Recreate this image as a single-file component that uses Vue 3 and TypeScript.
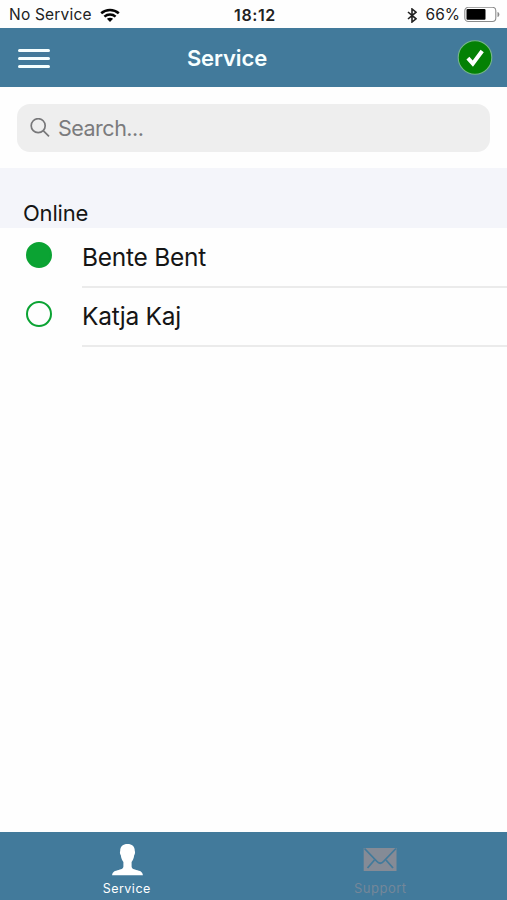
<script setup lang="ts">
import { ref, computed } from 'vue'

interface Contact {
  name: string
  available: boolean
}

type Tab = 'Service' | 'Support'

const contacts: Contact[] = [
  { name: 'Bente Bent', available: true },
  { name: 'Katja Kaj', available: false },
]

const query = ref('')
const activeTab = ref<Tab>('Service')

const visibleContacts = computed(() =>
  contacts.filter((c) => c.name.toLowerCase().includes(query.value.toLowerCase())),
)
</script>

<template>
  <div class="screen">
    <div class="status">
      <div class="status-side">
        <span class="carrier">No Service</span>
        <svg class="wifi" viewBox="0 0 20 14" width="20" height="14">
          <g fill="none" stroke="#050505" stroke-width="2.5">
            <path d="M1.2 5.2C6.2 .8 13.8 .8 18.8 5.2" />
            <path d="M4.4 8.6C7.6 5.8 12.4 5.8 15.6 8.6" />
          </g>
          <path d="M6.9 10.8C8.7 9.3 11.3 9.3 13.1 10.8L10 13.9Z" fill="#050505" />
        </svg>
      </div>
      <span class="clock">18:12</span>
      <div class="status-side right">
        <svg class="bluetooth" viewBox="0 0 10 15" width="10" height="15">
          <path d="M1 4L9 10.8L5 14V1L9 4.2L1 11" fill="none" stroke="#222" stroke-width="1.6" />
        </svg>
        <span class="percent">66%</span>
        <svg class="battery" viewBox="0 0 36 16" width="36" height="16">
          <rect x=".8" y=".3" width="31" height="14.2" rx="3.5" fill="#fff" stroke="#8b8b8b" stroke-width="1.1" />
          <rect x="2.5" y="2.1" width="19" height="10.6" rx="1" fill="#000" />
          <path d="M33.5 4.9C36 5.5 36 9.3 33.5 9.9Z" fill="#8b8b8b" />
        </svg>
      </div>
    </div>

    <header class="bar">
      <button class="menu" aria-label="Menu"><i></i><i></i><i></i></button>
      <h1>Service</h1>
      <svg class="check" viewBox="0 0 36 36" width="36" height="36">
        <circle cx="18" cy="17.5" r="16.8" fill="#048104" stroke="#75b58a" stroke-width="1.1" />
        <path d="M10.9 18.2L15.8 23.6L25.2 11" fill="none" stroke="#fff" stroke-width="4" />
      </svg>
    </header>

    <div class="search-area">
      <label class="search">
        <svg viewBox="0 0 20 20" width="20" height="20">
          <g fill="none" stroke="#777779" stroke-width="1.7">
            <circle cx="8.2" cy="7.7" r="7" />
            <path d="M13.2 12.7L19 18.3" />
          </g>
        </svg>
        <input v-model="query" type="text" placeholder="Search..." />
      </label>
    </div>

    <h2>Online</h2>
    <ul>
      <li v-for="contact in visibleContacts" :key="contact.name">
        <span class="dot" :class="{ filled: contact.available }"></span>
        <span class="name">{{ contact.name }}</span>
      </li>
    </ul>

    <nav>
      <button :class="{ active: activeTab === 'Service' }" @click="activeTab = 'Service'">
        <svg viewBox="0 0 32 32" width="32" height="32">
          <path
            fill="currentColor"
            d="M16.5 0C21 0 23.9 2.6 23.8 7C24.3 8 24.1 10.2 23.2 11.2C22.8 14.5 21.8 16.5 20.6 18V22.5C20.8 25 22.8 25.2 26.5 26.3C30.5 27.4 31.5 28.6 31.9 31.3H1.1C1.5 28.6 2.5 27.4 6.5 26.3C10.2 25.2 12.2 25 12.4 22.5V18C11.2 16.5 10.2 14.5 9.8 11.2C8.9 10.2 8.7 8 9.2 7C9.1 2.6 12 0 16.5 0Z"
          />
        </svg>
        <span>Service</span>
      </button>
      <button :class="{ active: activeTab === 'Support' }" @click="activeTab = 'Support'">
        <svg viewBox="0 0 34 32" width="34" height="32">
          <rect x=".7" y="4" width="32.8" height="23" fill="currentColor" />
          <g fill="none" stroke="#427a9b" stroke-width="1.8">
            <path d="M1.5 4.5L14 17.5C16 19.8 18.5 19.8 20.5 17.5L33 4.5" />
            <path d="M4.5 24L11.5 16M30 24L23 16" />
          </g>
        </svg>
        <span>Support</span>
      </button>
    </nav>
  </div>
</template>

<style>
body {
  margin: 0;
  background: #fff;
}
</style>

<style scoped>
.screen {
  display: flex;
  flex-direction: column;
  height: 900px;
  background: #fefefe;
  color: #151515;
  font-family: Inter, 'Liberation Sans', sans-serif;
}
button {
  padding: 0;
  border: 0;
  background: none;
  font: inherit;
}
svg {
  display: block;
  flex: none;
}
.status {
  display: grid;
  grid-template-columns: 1fr auto 1fr;
  align-items: center;
  box-sizing: border-box;
  height: 28px;
  padding: 1px 7px 0 9px;
  color: #222;
  font-size: 15.5px;
  line-height: 28px;
}
.status-side {
  display: flex;
  align-items: center;
}
.right {
  justify-content: flex-end;
}
.carrier {
  letter-spacing: 0.2px;
}
.wifi {
  margin-left: 8px;
}
.clock {
  padding-left: 1px;
  font-size: 16px;
  font-weight: 600;
  letter-spacing: 0.6px;
}
.percent {
  margin: 0 4px 0 9px;
}
.bar {
  display: grid;
  grid-template-columns: 36px 1fr 36px;
  align-items: center;
  box-sizing: border-box;
  height: 59px;
  padding: 0 14px 0 18px;
  background: #427a9b;
}
.menu {
  display: flex;
  flex-direction: column;
  gap: 5px;
  width: 32px;
  padding-top: 1px;
}
.menu i {
  height: 3px;
  border-radius: 1.5px;
  background: #f5ffff;
}
h1 {
  margin: 0;
  padding-right: 57px;
  color: #f7ffff;
  font-size: 22px;
  font-weight: 600;
  letter-spacing: -0.1px;
  text-align: center;
}
.search-area {
  height: 48px;
  padding: 17px 17px 16px;
}
.search {
  display: flex;
  align-items: center;
  gap: 8px;
  height: 48px;
  padding-left: 13px;
  border-radius: 13px;
  background: #eee;
}
input {
  flex: 1;
  min-width: 0;
  padding: 0;
  border: 0;
  outline: 0;
  background: none;
  font: 21.5px Inter, 'Liberation Sans', sans-serif;
  letter-spacing: -0.5px;
}
input::placeholder {
  color: #7b7b7d;
  opacity: 1;
}
h2 {
  box-sizing: border-box;
  height: 60px;
  margin: 0;
  padding: 30px 23px 0;
  background: #f4f5fa;
  font-size: 22px;
  font-weight: 400;
  letter-spacing: -0.2px;
  line-height: 30px;
}
ul {
  flex: 1;
  margin: 0;
  padding: 1px 0 0;
  list-style: none;
}
li {
  display: flex;
  height: 59px;
}
.dot {
  flex: none;
  box-sizing: border-box;
  width: 26px;
  height: 26px;
  margin: 13px 30px 0 26px;
  border: 2px solid #0ba333;
  border-radius: 50%;
}
.filled {
  background: #0ba333;
}
.name {
  flex: 1;
  border-bottom: 2px solid #ebebeb;
  font-size: 24.5px;
  letter-spacing: -0.25px;
  line-height: 56px;
}
nav {
  display: grid;
  grid-template-columns: 1fr 1fr;
  height: 68px;
  background: #427a9b;
}
nav button {
  display: flex;
  flex-direction: column;
  align-items: center;
  padding-top: 12px;
  color: #858b96;
}
nav button.active {
  color: #fff;
}
nav span {
  margin-top: 4px;
  font-size: 12.5px;
  letter-spacing: 0.5px;
  line-height: 17px;
}
nav button:not(.active) span {
  color: #748799;
  font-size: 13px;
}
</style>
